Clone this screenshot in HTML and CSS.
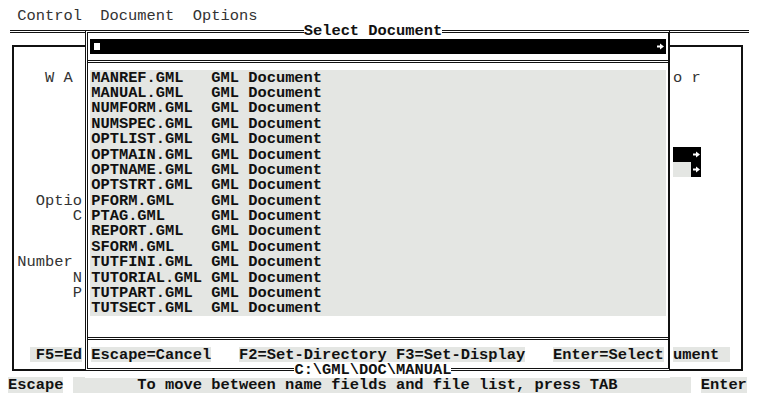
FILE: index.html
```html
<!DOCTYPE html>
<html>
<head>
<meta charset="utf-8">
<title>Select Document</title>
<link rel="stylesheet" href="styles.css">
</head>
<body>
<div class="screen">
  <div class="menubar"><span>Control</span><span>Document</span><span>Options</span></div>

  <div class="mainwin">
    <div class="win-title"></div>
    <div class="frame">
      <div class="pane pane-left">
        <div class="line"></div>
        <div class="line">   W A</div>
        <div class="line"></div>
        <div class="line"></div>
        <div class="line"></div>
        <div class="line"></div>
        <div class="line"></div>
        <div class="line"></div>
        <div class="line"></div>
        <div class="line">  Optio</div>
        <div class="line">      C</div>
        <div class="line"></div>
        <div class="line"></div>
        <div class="line">Number</div>
        <div class="line">      N</div>
        <div class="line">      P</div>
        <div class="line"></div>
        <div class="line"></div>
        <div class="line"></div>
        <div class="line bold">  <span class="key key-left">F5=Ed</span></div>
      </div>
      <div class="spacer"></div>
      <div class="pane pane-right">
        <div class="line"></div>
        <div class="line">o r</div>
        <div class="line"></div>
        <div class="line"></div>
        <div class="line"></div>
        <div class="line"></div>
        <div class="line field"><span class="fld-black fld-3"><svg class="arrow" width="7" height="7" viewBox="0 0 7 7"><path d="M0 3.5H4" stroke="#fff" stroke-width="2"/><path d="M3 0.5L7 3.5L3 6.5Z" fill="#fff"/></svg></span></div>
        <div class="line field"><span class="fld-gray"></span><span class="fld-black fld-1"><svg class="arrow" width="7" height="7" viewBox="0 0 7 7"><path d="M0 3.5H4" stroke="#fff" stroke-width="2"/><path d="M3 0.5L7 3.5L3 6.5Z" fill="#fff"/></svg></span></div>
        <div class="line"></div>
        <div class="line"></div>
        <div class="line"></div>
        <div class="line"></div>
        <div class="line"></div>
        <div class="line"></div>
        <div class="line"></div>
        <div class="line"></div>
        <div class="line"></div>
        <div class="line"></div>
        <div class="line"></div>
        <div class="line bold"><span class="key key-right">ument </span></div>
      </div>
    </div>
  </div>

  <div class="status">
    <span class="key">Escape</span>
    <span class="msg">To move between name fields and file list, press TAB</span>
    <span class="key enter">Enter</span>
  </div>

  <div class="dialog">
    <div class="dlg-edge dlg-top">
      <span class="seg seg-l seg-l-top"></span><span class="dlg-title">Select Document</span><span class="seg seg-r"></span>
    </div>
    <div class="dlg-body">
      <div class="input">
        <span class="cursor"></span>
        <svg class="arrow" width="7" height="7" viewBox="0 0 7 7"><path d="M0 3.5H4" stroke="#fff" stroke-width="2"/><path d="M3 0.5L7 3.5L3 6.5Z" fill="#fff"/></svg>
      </div>
      <div class="sep"></div>
      <div class="list">
        <div class="line"><span class="fn">MANREF.GML</span>GML Document</div>
        <div class="line"><span class="fn">MANUAL.GML</span>GML Document</div>
        <div class="line"><span class="fn">NUMFORM.GML</span>GML Document</div>
        <div class="line"><span class="fn">NUMSPEC.GML</span>GML Document</div>
        <div class="line"><span class="fn">OPTLIST.GML</span>GML Document</div>
        <div class="line"><span class="fn">OPTMAIN.GML</span>GML Document</div>
        <div class="line"><span class="fn">OPTNAME.GML</span>GML Document</div>
        <div class="line"><span class="fn">OPTSTRT.GML</span>GML Document</div>
        <div class="line"><span class="fn">PFORM.GML</span>GML Document</div>
        <div class="line"><span class="fn">PTAG.GML</span>GML Document</div>
        <div class="line"><span class="fn">REPORT.GML</span>GML Document</div>
        <div class="line"><span class="fn">SFORM.GML</span>GML Document</div>
        <div class="line"><span class="fn">TUTFINI.GML</span>GML Document</div>
        <div class="line"><span class="fn">TUTORIAL.GML</span>GML Document</div>
        <div class="line"><span class="fn">TUTPART.GML</span>GML Document</div>
        <div class="line"><span class="fn">TUTSECT.GML</span>GML Document</div>
      </div>
      <div class="line"></div>
      <div class="sep"></div>
      <div class="line buttons"><span class="key">Escape=Cancel</span>   <span class="key">F2=Set-Directory F3=Set-Display</span>   <span class="key">Enter=Select</span></div>
    </div>
    <div class="dlg-edge dlg-bottom">
      <span class="seg seg-l seg-l-bottom"></span><span class="dlg-title">C:\GML\DOC\MANUAL</span><span class="seg seg-r"></span>
    </div>
  </div>
</div>
</body>
</html>
```
FILE: styles.css
```css
:root {
  --rh: 15.4px;
  --g: #e4e6e3;
  --ink: #111;
  --shift: 1px;
}
* { box-sizing: border-box; }
html { background: #fff; }
body {
  margin: 8px;
  font-family: "Liberation Mono", "Courier New", monospace;
  font-size: 15.4px;
  line-height: 15.4px;
  color: var(--ink);
}
.screen {
  position: relative;
  width: 80ch;
  height: calc(var(--rh) * 25);
}
.bold { font-weight: bold; }
.line {
  height: var(--rh);
  padding-top: var(--shift);
  white-space: pre;
}

/* menu bar */
.menubar {
  height: var(--rh);
  padding-top: var(--shift);
  display: flex;
  gap: 2ch;
  padding-left: 1ch;
  color: #333;
}

/* background window */
.win-title {
  height: var(--rh);
  display: flex;
  align-items: center;
  padding-left: 2px;
  margin-right: -2px;
}
.win-title::before {
  content: "";
  flex: 1;
  border-top: 3px double var(--ink);
}
.frame {
  margin: calc(var(--rh) / 2 - 1px) calc(0.5ch - 1px);
  border: 2px solid var(--ink);
  padding: calc(var(--rh) / 2 - 1px) calc(0.5ch - 1px);
  display: flex;
}
.pane {
  width: 7ch;
  display: flex;
  flex-direction: column;
  color: #333;
}
.spacer { flex: 1; }
.key {
  display: inline-block;
  height: var(--rh);
  margin-top: calc(-1 * var(--shift));
  padding-top: var(--shift);
  vertical-align: top;
  background: var(--g);
  color: var(--ink);
}
.key-left { padding-left: 6px; margin-left: -6px; }
.key-right { padding-right: 2px; }
.field { display: flex; padding-top: 0; }
.fld-black {
  background: #000;
  display: flex;
  align-items: center;
  justify-content: flex-end;
  padding-right: 1px;
}
.fld-3 { width: 3ch; }
.fld-1 { width: 1ch; }
.fld-gray { width: 2ch; background: var(--g); }

/* status line */
.status {
  height: var(--rh);
  display: flex;
  font-weight: bold;
  white-space: pre;
}
.status > span {
  height: var(--rh);
  margin-top: 0;
  padding-top: var(--shift);
}
.msg {
  margin-left: 1ch;
  width: 67ch;
  padding-left: 7ch;
  background: var(--g);
}
.enter { margin-left: 1ch; }

/* dialog */
.dialog {
  position: absolute;
  left: 77px;
  top: var(--rh);
  width: 585px;
  height: calc(var(--rh) * 23);
  display: flex;
  flex-direction: column;
  background: #fff;
  font-weight: bold;
}
.dlg-edge {
  height: var(--rh);
  display: flex;
}
.dlg-top .seg {
  height: calc(var(--rh) / 2 + 1.5px);
  align-self: flex-end;
  border-top: 3px double var(--ink);
}
.dlg-bottom .seg {
  height: calc(var(--rh) / 2 + 1.5px);
  align-self: flex-start;
  border-bottom: 3px double var(--ink);
}
.seg-l { border-left: 3px double var(--ink); }
.seg-r { flex: 1; border-right: 2px solid var(--ink); }
.seg-l-top { width: 218.7px; }
.seg-l-bottom { width: 209.4px; }
.dlg-title {
  white-space: pre;
  background: #fff;
  padding-top: var(--shift);
}
.dlg-body {
  flex: 1;
  border-left: 3px double var(--ink);
  border-right: 2px solid var(--ink);
  padding: 0 2px;
  display: flex;
  flex-direction: column;
}
.input {
  height: var(--rh);
  background: #000;
  display: flex;
  align-items: center;
  justify-content: space-between;
  padding: 0 2px 0 4px;
}
.cursor {
  width: 6px;
  height: 7px;
  background: #fff;
}
.arrow { display: block; }
.sep {
  height: var(--rh);
  margin: 0 -2px;
  display: flex;
  align-items: center;
}
.sep::before {
  content: "";
  flex: 1;
  border-top: 3px double var(--ink);
}
.list {
  background: var(--g);
  padding-left: 1.2px;
}
.fn {
  display: inline-block;
  width: 13ch;
}
.buttons { padding-left: 1.2px; }
```
